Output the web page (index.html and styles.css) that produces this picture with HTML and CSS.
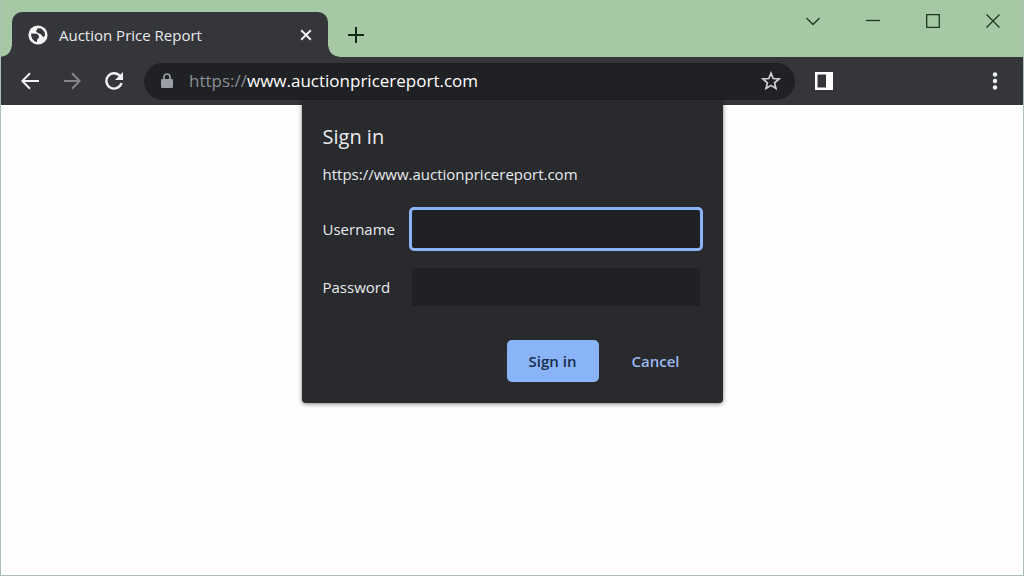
FILE: index.html
```html
<!DOCTYPE html>
<html lang="en">
<head>
<meta charset="utf-8">
<title>Auction Price Report</title>
<link rel="stylesheet" href="styles.css">
</head>
<body>
<div class="window">
  <header class="tab-strip">
    <div class="tab">
      <svg class="tab-icon" viewBox="0 0 20 20" width="20" height="20" aria-hidden="true">
        <circle cx="10" cy="10" r="9.600" fill="#f4f5f5"/>
        <path d="M3.200 8.500 9 8.700l2 2.300-.3 2.300-1.600 1.200v2.700A7.400 7.400 0 0 1 3.200 8.500zM9.500 3.300 13.200 3.400 16.700 7.200 17 10.500 15.300 12.200 13.200 9.500 10.500 8.200 8 6.800z" fill="#35363a"/>
      </svg>
      <span class="tab-title">Auction Price Report</span>
      <button class="icon-button tab-close" type="button" aria-label="Close tab">
        <svg viewBox="0 0 12 12" width="12" height="12"><path d="M1.200 1.200 10.800 10.800M10.800 1.200 1.200 10.800" fill="none" stroke="#f1f3f4" stroke-width="2"/></svg>
      </button>
    </div>
    <button class="icon-button new-tab" type="button" aria-label="New tab">
      <svg viewBox="0 0 16 16" width="16" height="16"><path d="M8 0v16M0 8h16" fill="none" stroke="#15291b" stroke-width="2"/></svg>
    </button>
    <div class="window-controls">
      <button class="icon-button" type="button" aria-label="Search tabs"><svg viewBox="0 0 14 14" width="14" height="14"><path d="M.5 4 7 10.500 13.500 4" fill="none" stroke="#1c3822" stroke-width="1.300"/></svg></button>
      <button class="icon-button" type="button" aria-label="Minimize"><svg viewBox="0 0 14 14" width="14" height="14"><path d="M0 6.500h14" fill="none" stroke="#1c3822" stroke-width="1.300"/></svg></button>
      <button class="icon-button" type="button" aria-label="Maximize"><svg viewBox="0 0 14 14" width="14" height="14"><path d="M.7.7h12.600v12.600H.7z" fill="none" stroke="#1c3822" stroke-width="1.300"/></svg></button>
      <button class="icon-button" type="button" aria-label="Close"><svg viewBox="0 0 14 14" width="14" height="14"><path d="M.5.5l13 13M13.500.5l-13 13" fill="none" stroke="#1c3822" stroke-width="1.300"/></svg></button>
    </div>
  </header>

  <div class="toolbar">
    <nav class="nav-buttons" aria-label="History">
      <button class="icon-button" type="button" aria-label="Back"><svg viewBox="0 0 18 18" width="18" height="18"><path d="M18 9H1.500M9 1.200 1.300 9 9 16.800" fill="none" stroke="#f1f3f4" stroke-width="2"/></svg></button>
      <button class="icon-button" type="button" aria-label="Forward" disabled><svg viewBox="0 0 18 18" width="18" height="18"><path d="M1 9h15.500M9 1.200 16.700 9 9 16.800" fill="none" stroke="#85868a" stroke-width="2"/></svg></button>
      <button class="icon-button" type="button" aria-label="Reload"><svg viewBox="0 0 18 18" width="18" height="18"><path d="M15.200 4.200A7.700 7.700 0 1 0 16.500 11" fill="none" stroke="#f1f3f4" stroke-width="2.400"/><path d="M18 0v8h-8z" fill="#f1f3f4"/></svg></button>
    </nav>
    <div class="address-bar">
      <svg class="lock" viewBox="0 0 12 16" width="12" height="16" aria-hidden="true"><path d="M3 7V4a3 3 0 0 1 6 0v3" fill="none" stroke="#9aa0a6" stroke-width="1.700"/><rect y="6" width="12" height="9" rx="1.300" fill="#9aa0a6"/></svg>
      <span class="url"><span class="scheme">https://</span>www.auctionpricereport.com</span>
      <button class="icon-button star" type="button" aria-label="Bookmark this page"><svg viewBox="0 0 20 20" width="20" height="20"><path d="M10 2.200 12.200 7.500 18 8 13.600 11.800 14.900 17.400 10 14.400 5.100 17.400 6.400 11.800 2 8 7.800 7.500z" fill="none" stroke="#d0d2d5" stroke-width="1.700"/></svg></button>
    </div>
    <button class="icon-button side-panel" type="button" aria-label="Side panel"><svg viewBox="0 0 20 20" width="20" height="20"><path d="M1 1h18v18H1zM3.500 3.500v13H12v-13z" fill="#fff" fill-rule="evenodd"/></svg></button>
    <button class="icon-button menu" type="button" aria-label="Menu"><svg viewBox="0 0 6 20" width="6" height="20"><circle cx="3" cy="3.500" r="2.200" fill="#f1f3f4"/><circle cx="3" cy="10" r="2.200" fill="#f1f3f4"/><circle cx="3" cy="16.500" r="2.200" fill="#f1f3f4"/></svg></button>
  </div>

  <main class="page">
    <form class="dialog" role="dialog" aria-labelledby="dialog-title">
      <h1 class="dialog-title" id="dialog-title">Sign in</h1>
      <p class="dialog-origin">https://www.auctionpricereport.com</p>
      <div class="fields">
        <label for="username">Username</label>
        <input class="field field-active" id="username" type="text" autocomplete="off">
        <label for="password">Password</label>
        <input class="field" id="password" type="password" autocomplete="off">
      </div>
      <div class="actions">
        <button class="button button-primary" type="button">Sign in</button>
        <button class="button" type="button">Cancel</button>
      </div>
    </form>
  </main>
</div>
</body>
</html>
```

FILE: styles.css
```css
* {
  box-sizing: border-box;
}

body {
  margin: 0;
  font-family: "Segoe UI", "Open Sans", "Noto Sans", sans-serif;
  font-size: 15px;
  line-height: 20px;
  color: #e8eaed;
}

.window {
  display: flex;
  flex-direction: column;
  min-height: 100vh;
  border: 1px solid #adbfb3;
  border-top: 0;
  background: #a6c8a5;
}

.icon-button {
  display: flex;
  flex: none;
  align-items: center;
  justify-content: center;
  padding: 0;
  border: 0;
  background: none;
}

.tab-strip {
  display: flex;
  align-items: flex-end;
  height: 57px;
}

.tab {
  position: relative;
  display: flex;
  align-items: center;
  width: 316px;
  height: 45px;
  margin-left: 11px;
  padding: 0 16px;
  border-radius: 10px 10px 0 0;
  background: #35363a;
}

.tab::before,
.tab::after {
  content: "";
  position: absolute;
  bottom: 0;
  width: 11px;
  height: 11px;
}

.tab::before {
  right: 100%;
  background: radial-gradient(circle at 0 0, transparent 10px, #35363a 11px);
}

.tab::after {
  left: 100%;
  background: radial-gradient(circle at 100% 0, transparent 10px, #35363a 11px);
}

.tab-icon {
  flex: none;
}

.tab-title {
  flex: 1;
  padding-left: 11px;
  white-space: nowrap;
}

.new-tab {
  width: 32px;
  height: 45px;
  margin-left: 12px;
}

.window-controls {
  display: flex;
  align-self: flex-start;
  margin-left: auto;
}

.window-controls .icon-button {
  width: 60px;
  height: 42px;
}

.toolbar {
  display: flex;
  align-items: center;
  height: 48px;
  padding: 0 20px;
  background: #35363a;
}

.nav-buttons {
  display: flex;
  gap: 24px;
}

.address-bar {
  display: flex;
  flex: 1;
  align-items: center;
  min-width: 0;
  height: 37px;
  margin-left: 21px;
  padding: 0 14px 0 17px;
  border-radius: 19px;
  background: #202124;
}

.lock {
  flex: none;
}

.url {
  flex: 1;
  padding-left: 16px;
  overflow: hidden;
  font-size: 17px;
  line-height: 26px;
  white-space: nowrap;
  color: #fff;
}

.scheme {
  color: #8b8f94;
}

.side-panel {
  margin: 0 158px 0 19px;
}

.menu {
  margin-right: 5px;
}

.page {
  position: relative;
  flex: 1;
  background: #fdfefd;
}

.dialog {
  position: absolute;
  top: -5px;
  right: 0;
  left: 0;
  width: 421px;
  max-width: 100%;
  margin: 0 auto;
  padding: 23px 20px 21px 21px;
  border-radius: 0 0 4px 4px;
  background: #292a2d;
  box-shadow: 0 1px 4px rgba(0, 0, 0, 0.5);
}

.dialog-title {
  margin: 0 0 13px;
  font-size: 20px;
  font-weight: 400;
  line-height: 28px;
}

.dialog-origin {
  margin: 0 0 23px;
}

.fields {
  display: grid;
  grid-template-columns: 86px 1fr;
  row-gap: 14px;
  align-items: center;
}

.field {
  width: 100%;
  height: 44px;
  padding: 0 12px;
  border: 3px solid #292a2d;
  border-radius: 5px;
  outline: 0;
  background: #202124;
  color: #e8eaed;
  font: inherit;
}

.field-active {
  border-color: #8ab4f8;
}

.actions {
  display: flex;
  justify-content: flex-end;
  gap: 14px;
  margin-top: 31px;
  padding-right: 4px;
}

.button {
  width: 86px;
  height: 42px;
  padding: 0;
  border: 1px solid #252629;
  border-radius: 5px;
  background: transparent;
  color: #9ab9f3;
  font: inherit;
  font-weight: 600;
}

.button-primary {
  width: 92px;
  border: 0;
  background: #8ab4f8;
  color: #172c4a;
}
```
